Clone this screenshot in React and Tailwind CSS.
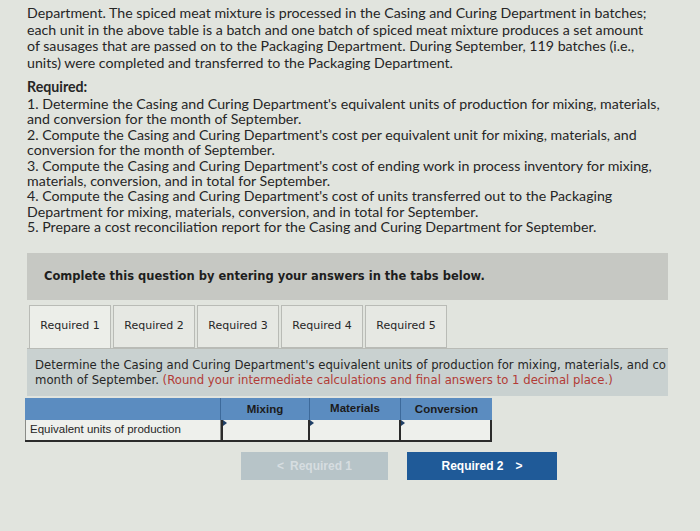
import React, { useState } from "react";

const tabs = ["Required 1", "Required 2", "Required 3", "Required 4", "Required 5"];

const requirements = [
  ["1. Determine the Casing and Curing Department's equivalent units of production for mixing, materials,", "and conversion for the month of September."],
  ["2. Compute the Casing and Curing Department's cost per equivalent unit for mixing, materials, and", "conversion for the month of September."],
  ["3. Compute the Casing and Curing Department's cost of ending work in process inventory for mixing,", "materials, conversion, and in total for September."],
  ["4. Compute the Casing and Curing Department's cost of units transferred out to the Packaging", "Department for mixing, materials, conversion, and in total for September."],
  ["5. Prepare a cost reconciliation report for the Casing and Curing Department for September."],
];

const Cell = () => (
  <div className="relative h-full border-r-2 border-[#2b2b2b] bg-[#eef0ec]">
    <span className="absolute left-0 top-0 h-0 w-0 border-y-[3px] border-l-[4px] border-y-transparent border-l-[#1f3f66]" />
  </div>
);

export default function App() {
  const [active, setActive] = useState(0);

  return (
    <div className="h-[531px] w-[700px] overflow-hidden bg-[#e1e4de] text-[#262626]">
      {/* problem text */}
      <div className="pl-[27px] pt-[5px] font-['Lato',sans-serif] text-[14.2px] leading-[16.6px]">
        <p className="whitespace-nowrap">Department. The spiced meat mixture is processed in the Casing and Curing Department in batches;</p>
        <p className="whitespace-nowrap">each unit in the above table is a batch and one batch of spiced meat mixture produces a set amount</p>
        <p className="whitespace-nowrap">of sausages that are passed on to the Packaging Department. During September, 119 batches (i.e.,</p>
        <p className="whitespace-nowrap">units) were completed and transferred to the Packaging Department.</p>

        <p className="mt-[8px] font-bold">Required:</p>
        <div className="leading-[15.4px]">
          {requirements.map((lines, i) =>
            lines.map((l, j) => (
              <p key={`${i}-${j}`} className="whitespace-nowrap">
                {l}
              </p>
            ))
          )}
        </div>
      </div>

      {/* notice bar */}
      <div className="ml-[27px] mt-[18px] flex h-[47px] w-[641px] items-center bg-[#c6c8c3] pl-[17px] font-['DejaVu_Sans',sans-serif] text-[11.5px] font-bold text-[#1e1e1e]">
        Complete this question by entering your answers in the tabs below.
      </div>

      {/* tabs */}
      <div className="ml-[29px] mt-[5px] flex gap-[2px] font-['DejaVu_Sans',sans-serif] text-[11px]">
        {tabs.map((t, i) => (
          <button
            key={t}
            onClick={() => setActive(i)}
            className={`flex h-[43px] w-[82px] items-center justify-center border border-[#b9bbb6] ${
              i === active ? "border-b-0 bg-[#eceee9]" : "bg-[#e6e8e3]"
            }`}
          >
            {t}
          </button>
        ))}
      </div>

      {/* instructions */}
      <div className="ml-[27px] h-[48px] w-[641px] overflow-hidden border-t border-[#b9bbb6] bg-[#c9d1d0] pl-[8px] pt-[9px] font-['DejaVu_Sans',sans-serif] text-[11.7px] leading-[15px]">
        <p className="whitespace-nowrap">
          Determine the Casing and Curing Department's equivalent units of production for mixing, materials, and co
        </p>
        <p className="whitespace-nowrap">
          month of September. <span className="text-[#b23b36]">(Round your intermediate calculations and final answers to 1 decimal place.)</span>
        </p>
      </div>

      {/* table */}
      <div className="ml-[25px] mt-[2px] w-[467px] font-['Liberation_Sans',sans-serif] text-[11.5px]">
        <div className="grid h-[22px] grid-cols-[196px_89px_91px_91px] bg-[#5b8cc0] font-bold text-[#1b1b1b]">
          <div className="border-r border-[#3d6a9b]" />
          <div className="flex items-start justify-center border-r border-[#3d6a9b] pt-[3px]">Mixing</div>
          <div className="flex items-center justify-center border-r border-[#3d6a9b]">Materials</div>
          <div className="flex items-center justify-center pt-[2px]">Conversion</div>
        </div>
        <div className="grid h-[22px] grid-cols-[196px_89px_91px_91px] border-b-2 border-[#2b2b2b]">
          <div className="flex items-center border-x border-[#8a8c88] bg-[#eef0ec] pl-[4px]">Equivalent units of production</div>
          <div className="relative border-l-2 border-[#2b2b2b]">
            <Cell />
          </div>
          <Cell />
          <Cell />
        </div>
      </div>

      {/* nav buttons */}
      <div className="ml-[241px] mt-[10px] flex gap-[19px] font-['Liberation_Sans',sans-serif] text-[12px] font-bold">
        <button className="flex h-[28px] w-[147px] items-center justify-center gap-[6px] bg-[#b7c4c8] text-[#d6dde0]">
          <span>&lt;</span>
          <span>Required 1</span>
        </button>
        <button className="flex h-[28px] w-[150px] items-center justify-center gap-[12px] bg-[#1f5a98] text-white">
          <span>Required 2</span>
          <span>&gt;</span>
        </button>
      </div>
    </div>
  );
}
